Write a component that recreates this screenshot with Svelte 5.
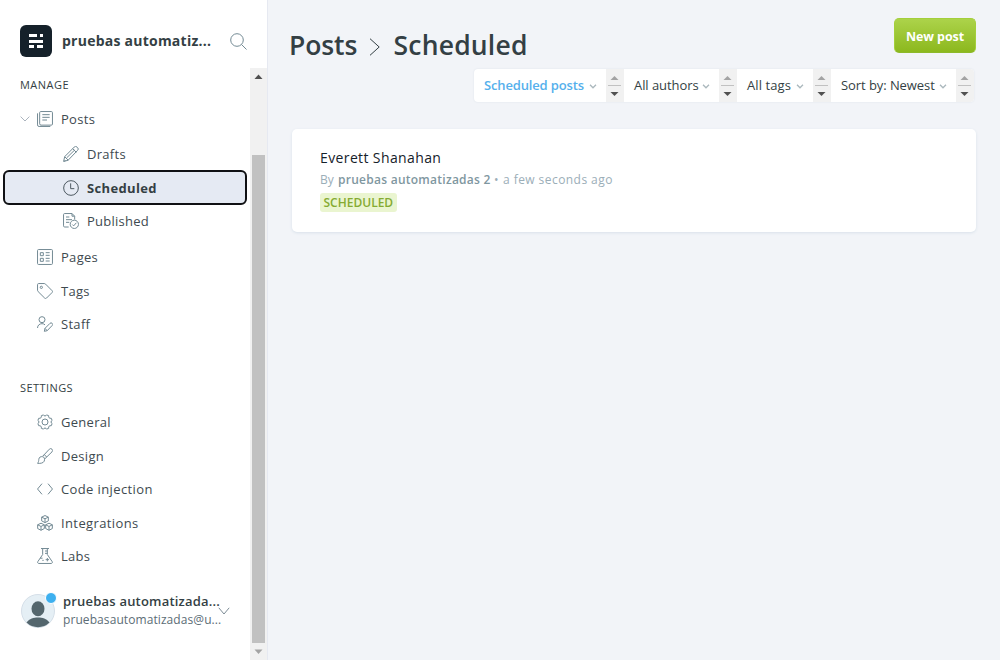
<script>
  const manage = [
    { label: 'Pages', icon: 'pages' },
    { label: 'Tags', icon: 'tags' },
    { label: 'Staff', icon: 'staff' }
  ];
  const drafts = [
    { label: 'Drafts', icon: 'drafts' },
    { label: 'Scheduled', icon: 'clock', active: true },
    { label: 'Published', icon: 'published' }
  ];
  const settings = [
    { label: 'General', icon: 'gear' },
    { label: 'Design', icon: 'brush' },
    { label: 'Code injection', icon: 'code', wide: true },
    { label: 'Integrations', icon: 'cubes', wide: true },
    { label: 'Labs', icon: 'flask' }
  ];
  const filters = [
    { label: 'Scheduled posts', cls: 'f1' },
    { label: 'All authors', cls: 'f2' },
    { label: 'All tags', cls: 'f3' },
    { label: 'Sort by: Newest', cls: 'f4' }
  ];
</script>

{#snippet icon(name)}
  <svg class="ico" viewBox="0 0 24 24">
    {#if name === 'posts'}
      <path d="M5.500 .8h16a1.700 1.700 0 0 1 1.700 1.700v17a1.700 1.700 0 0 1-1.700 1.700h-15.500a2 2 0 0 1-2-2V2.500A1.700 1.700 0 0 1 5.500 .8zM.8 3.500v17.400a2.300 2.300 0 0 0 2.300 2.300H20M8 5.500h11M8 9.500h11M8 13.500h7" />
    {:else if name === 'drafts'}
      <path d="M1 23l1.500-7L16.500 2a3.200 3.200 0 0 1 5 0 3.200 3.200 0 0 1 0 5L7.500 21.500zM2.500 16l5.500 5.500M14.500 4l5.500 5.500M5.500 17.800L17.500 6M1 23l3-1" />
    {:else if name === 'clock'}
      <circle cx="12" cy="12" r="11" /><path d="M11.500 5v8h5.500" />
    {:else if name === 'published'}
      <path d="M8.500 21H2.500A1.700 1.700 0 0 1 .8 19.300V2.500A1.700 1.700 0 0 1 2.500 .8h11l4 4v5M13.500 .8v4h4M4.500 6h5M4.500 10h9M4.500 14h5" /><circle cx="17" cy="17" r="6.200" /><path d="M14 17.300l2 2 4-4.600" />
    {:else if name === 'pages'}
      <rect x=".8" y=".8" width="22.400" height="22.400" rx="1.500" /><path d="M5 5.500h4.500V10H5zM5 14h4.500v4.500H5zM13 5.500h6M13 9.500h6M13 14h6M13 18h6" />
    {:else if name === 'tags'}
      <path d="M.8 2.500A1.700 1.700 0 0 1 2.500 .8h8.300a3 3 0 0 1 2.100.9l9.700 9.800a2 2 0 0 1 0 2.800l-8.300 8.300a2 2 0 0 1-2.800 0L1.700 12.900a3 3 0 0 1-.9-2.100z" /><circle cx="6.500" cy="6.500" r="1.700" />
    {:else if name === 'staff'}
      <circle cx="7.500" cy="5.500" r="4.500" /><path d="M.8 18c0-4 3-6.500 6.700-6.500 2 0 3.300.6 4.500 1.800M11 23l1-4.500 7.500-7.500a2.200 2.200 0 0 1 3.200 3.300L15.300 22zM12 18.500l3.300 3.500" />
    {:else if name === 'gear'}
      <path stroke-linejoin="round" d="M9.600 1.300a2.600 2.600 0 0 0 4.800 0l3.300 1.400a2.600 2.600 0 0 0 3.500 3.500l1.500 3.400a2.600 2.600 0 0 0 0 4.800l-1.500 3.400a2.600 2.600 0 0 0-3.500 3.500l-3.300 1.400a2.600 2.600 0 0 0-4.800 0l-3.300-1.400a2.600 2.600 0 0 0-3.500-3.500l-1.500-3.400a2.600 2.600 0 0 0 0-4.800l1.500-3.400a2.600 2.600 0 0 0 3.500-3.500z" /><circle cx="12" cy="12" r="4.500" />
    {:else if name === 'brush'}
      <path d="M8.500 12.500L18.500 1.800a2.800 2.800 0 0 1 4 4L12 16M8.500 12.500l3.500 3.500M11 10l3.500 3.500M8.500 13.200c-3-1-5.500.8-5.800 3.800-.2 2.500-.4 4.300-1.900 6 4.500.4 8.700-.4 10-3.200.7-1.500.6-2.800.2-4.300" />
    {:else if name === 'code'}
      <path d="M7.500 4L.8 12l6.700 8M16.500 4l6.700 8-6.700 8" />
    {:else if name === 'cubes'}
      {#each [[12, 6], [6, 17.500], [18, 17.500]] as [x, y]}
        <path transform="translate({x} {y})" d="M0-5.200L5-2.800V2.800L0 5.400-5 2.800V-2.800zM-5-2.800L0-.3 5-2.800M0-.3V5.400" />
      {/each}
    {:else if name === 'flask'}
      <path d="M6 .8h12M8.500 .8v9L1.200 20.500c-.7 1.400 0 2.700 1.600 2.700h18.400c1.600 0 2.300-1.300 1.600-2.700L15.500 9.800V.8M4.800 15.300h3.500M12 4.500h3.500M12 8h3.500M8 18.500h2M13 17.500h5M15.500 15v5" />
    {/if}
  </svg>
{/snippet}

{#snippet row(item)}
  <div class="row" class:active={item.active} class:wide={item.wide}>{@render icon(item.icon)}<span>{item.label}</span></div>
{/snippet}

<div class="app">
  <aside>
    <header>
      <svg class="logo" viewBox="0 0 32 32"><rect width="32" height="32" rx="6" fill="#15212a" /><path fill="#fff" d="M9 9h8v3H9zM20 9h3v3h-3zM9 15h14v3H9zM9 20h5v3H9zM17 20h6v3h-6z" /></svg>
      <strong>pruebas automatiz...</strong>
      <svg class="search" viewBox="0 0 17 17"><circle cx="7" cy="7" r="6.300" /><path d="M11.500 11.500l5 5" /></svg>
    </header>
    <div class="scroll">
      <nav>
        <h2>MANAGE</h2>
        <div class="row posts"><svg class="chev" viewBox="0 0 10 6"><path d="M.6 .6L5 5 9.400 .6" /></svg>{@render icon('posts')}<span>Posts</span></div>
        <div class="sub">{#each drafts as item}{@render row(item)}{/each}</div>
        {#each manage as item}{@render row(item)}{/each}
        <h2 class="second">SETTINGS</h2>
        {#each settings as item}{@render row(item)}{/each}
        <div class="user">
          <div class="avatar">
            <svg viewBox="0 0 34 34"><circle cx="17" cy="17" r="16.500" fill="#e5eff5" stroke="#d5dfe8" /><ellipse cx="17" cy="14.700" rx="6.500" ry="7.500" fill="#54666d" /><path d="M5.500 28.500c3-4 7-5 11.500-5s8.500 1 11.500 5a16.500 16.500 0 0 1-23 0z" fill="#54666d" /></svg>
            <i></i>
          </div>
          <div class="who"><b>pruebas automatizada...</b><small>pruebasautomatizadas@u...</small></div>
          <svg class="uchev" viewBox="0 0 12 8"><path d="M.8 .8L6 7l5.200-6.200" /></svg>
        </div>
      </nav>
      <div class="bar">
        <svg viewBox="0 0 17 17"><path fill="#505050" d="M8.500 6.500l4 4.500h-8z" /></svg>
        <div class="thumb"></div>
        <svg viewBox="0 0 17 17"><path fill="#a3a3a3" d="M8.500 11l4-4.500h-8z" /></svg>
      </div>
    </div>
  </aside>
  <main>
    <div class="top">
      <h1><span class="p">Posts</span><svg viewBox="0 0 11 18"><path d="M1 .7L10.200 9 1 17.300" /></svg><span class="s">Scheduled</span></h1>
      <button>New post</button>
    </div>
    <div class="filters">
      {#each filters as f}
        <div class="filter {f.cls}">
          <span>{f.label}</span>
          <svg class="fc" viewBox="0 0 8 5"><path d="M1 .8l3 3 3-3" /></svg>
        </div>
        <svg class="spin" viewBox="0 0 18 33"><path fill="#a3a3a3" d="M8.500 7l4 4h-8z" /><path stroke="#c1c1c1" d="M2 16.500h13" /><path fill="#505050" d="M8.500 27l4-4h-8z" /></svg>
      {/each}
    </div>
    <article>
      <h3>Everett Shanahan</h3>
      <p><span class="by">By</span><b>pruebas automatizadas 2</b><span class="dot">•</span><span class="ago">a few seconds ago</span></p>
      <span class="badge">SCHEDULED</span>
    </article>
  </main>
</div>

<style>
  .app { width: 1000px; height: 660px; display: flex; overflow: hidden; background: #f2f4f8; font-family: "Open Sans", "Noto Sans", sans-serif; color: #343f44; }
  svg { fill: none; display: block; flex: none; }
  h1, h2, h3, p { margin: 0; font-weight: 400; }
  aside { width: 267px; flex: none; background: #fff; border-right: 1px solid #e6e9f1; display: flex; flex-direction: column; }
  header { height: 68px; padding: 14px 0 0 20px; box-sizing: border-box; display: flex; align-items: center; }
  .logo { width: 32px; height: 32px; }
  header strong { width: 158px; margin: 0 0 2px 10px; font-size: 14px; letter-spacing: .24px; white-space: nowrap; }
  .search { width: 17px; height: 17px; margin-left: 10px; stroke: #738a94; }
  .scroll { height: 592px; display: flex; }
  nav { width: 250px; }
  h2 { height: 34px; padding-left: 20px; line-height: 34px; font-size: 11px; font-weight: 500; letter-spacing: .48px; }
  .second { margin: 29.500px 0 .8px; letter-spacing: .42px; }
  .row { height: 33.500px; padding-left: 37px; display: flex; align-items: center; gap: 8px; font-size: 13px; letter-spacing: .3px; color: #3e4a50; box-sizing: border-box; white-space: nowrap; }
  .wide { letter-spacing: .38px; }
  .posts { padding-left: 20px; gap: 8px; }
  .chev { width: 10px; height: 6px; margin-right: -1px; stroke: #abb4be; }
  .ico { width: 16px; height: 16px; stroke: #738a94; stroke-width: 1.500; }
  .sub { margin: 1px 0 3px; }
  .sub .row { padding-left: 63px; }
  .sub .row:first-child { padding-top: 1.500px; }
  .sub .active { height: 35px; margin: 0 3px; padding-left: 58px; border: 2px solid #101114; border-radius: 6px; background: #e5eaf3; font-weight: 700; letter-spacing: .36px; color: #343f44; }
  .active .ico { stroke: #4c5860; }
  .sub .row:last-child { height: 32.500px; letter-spacing: .24px; }
  .user { margin-top: 21.500px; height: 34px; padding-left: 21px; display: flex; align-items: center; }
  .avatar { width: 34px; height: 34px; position: relative; }
  .avatar i { position: absolute; top: -2px; right: -2px; width: 10px; height: 10px; border: 1px solid #fff; border-radius: 50%; background: #3eb0ef; }
  .who { width: 155px; margin: -1px 0 0 8px; display: flex; flex-direction: column; gap: 1px; line-height: 18px; white-space: nowrap; }
  .who b { font-size: 13px; font-weight: 600; letter-spacing: .2px; }
  .who small { font-size: 12px; letter-spacing: .08px; color: #5c6d76; }
  .uchev { width: 12px; height: 8px; stroke: #7c8b95; }
  .bar { width: 17px; background: #f1f1f1; display: flex; flex-direction: column; }
  .bar svg { width: 17px; height: 17px; }
  .thumb { width: 13px; height: 488px; margin: auto auto 0; background: #c1c1c1; }
  main { flex: 1; padding: 18px 24px 0; }
  .top { display: flex; justify-content: space-between; height: 51px; }
  h1 { display: flex; align-items: center; height: 53px; margin-left: -3px; font-size: 26.500px; font-weight: 550; }
  h1 svg { width: 11px; height: 18px; margin: 4px 13.500px 0 0; stroke: #343f44; }
  .p { width: 80px; letter-spacing: -.1px; }
  .s { letter-spacing: .2px; }
  button { width: 82px; height: 35px; padding: 1px 0 0; border: 1px solid #a4cf3b; border-bottom-color: #8db92a; border-radius: 5px; background: linear-gradient(#acd34a, #8cb81e); color: #fff; font: 700 12.500px "Open Sans", sans-serif; letter-spacing: -.1px; }
  .filters { margin-left: 182px; width: 500px; height: 33px; display: flex; overflow: hidden; border-radius: 4px; background: #fff; box-shadow: 0 0 2px #dce1e8; }
  .filter { display: flex; align-items: center; justify-content: space-between; padding: 0 9px 0 10px; box-sizing: border-box; font-size: 13px; letter-spacing: -.07px; white-space: nowrap; }
  .filter span { margin-top: -2px; }
  .f1 { width: 132px; color: #55b0ec; font-weight: 600; letter-spacing: -.15px; }
  .f2 { width: 95px; }
  .f3 { width: 76px; letter-spacing: .1px; }
  .f4 { width: 125px; }
  .fc { width: 8px; height: 5px; margin-top: 2px; stroke: #abb8bd; stroke-width: 1.300; }
  .spin { width: 18px; height: 33px; background: #f1f1f1; }
  article { margin-top: 27px; height: 103px; padding: 19px 28px; box-sizing: border-box; background: #fff; border-radius: 5px; box-shadow: 0 1px 3px #d9e1ea; }
  h3 { font-size: 14px; font-weight: 500; letter-spacing: .38px; line-height: 20px; color: #15212a; }
  p { height: 22px; line-height: 23px; display: flex; font-size: 12px; color: #9baeb8; white-space: nowrap; }
  p b { width: 156px; font-weight: 600; letter-spacing: .26px; color: #7f979f; }
  .by { width: 18px; }
  .dot { width: 9px; }
  .ago { letter-spacing: .44px; }
  .badge { display: block; width: 77px; height: 19px; margin-top: 3px; padding-left: 3.500px; box-sizing: border-box; border-radius: 3px; background: #eaf5d0; color: #85ab32; font-size: 12px; font-weight: 600; line-height: 19px; }
</style>
